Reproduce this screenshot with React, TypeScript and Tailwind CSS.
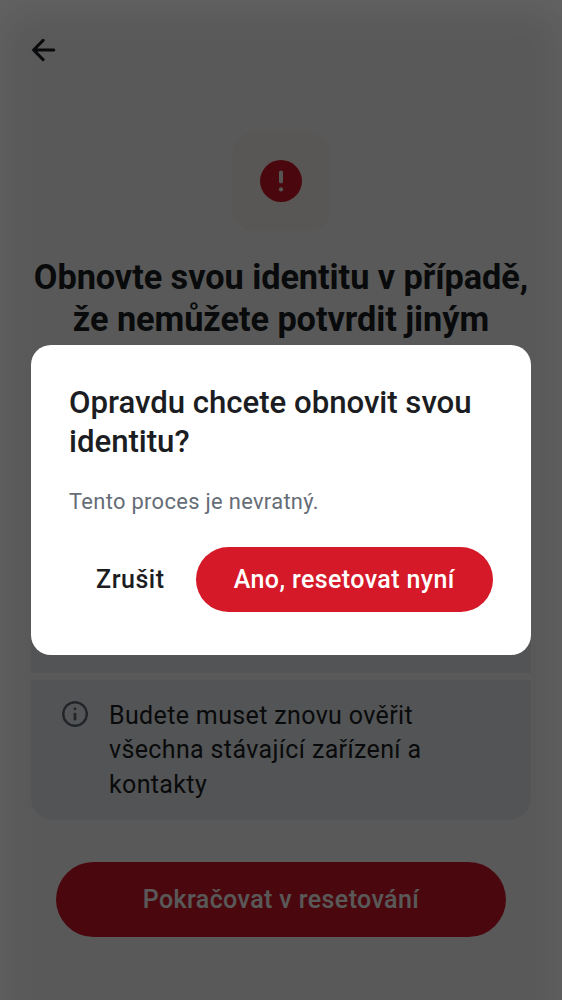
import React from "react";

function BackArrow() {
  return (
    <svg className="block h-6 w-6" viewBox="0 0 24 24" fill="none" stroke="#1b1d22" strokeWidth="3" strokeLinecap="round" strokeLinejoin="round">
      <path d="M21.8 12H2M11.1 2.4L1.6 12l9.5 9.6" />
    </svg>
  );
}

function ErrorIcon() {
  return (
    <svg className="block h-[42px] w-[42px]" viewBox="0 0 42 42">
      <circle cx="21" cy="21" r="21" fill="#d51928" />
      <rect x="19" y="10.8" width="4" height="12.4" rx="1.4" fill="#f7f3ef" />
      <circle cx="21" cy="29.4" r="2.1" fill="#f7f3ef" />
    </svg>
  );
}

function InfoIcon() {
  return (
    <svg className="block h-[26px] w-[26px] shrink-0" viewBox="0 0 26 26">
      <circle cx="13" cy="13" r="11.8" fill="none" stroke="#656d77" strokeWidth="2.5" />
      <circle cx="13" cy="7.9" r="1.4" fill="#656d77" />
      <rect x="11.6" y="11.8" width="2.8" height="7.6" rx="1.2" fill="#656d77" />
    </svg>
  );
}

function ResetPage() {
  return (
    <div className="flex h-full flex-col bg-white text-[#1b1d22]">
      <header className="flex h-[100px] shrink-0 items-center pl-8">
        <button aria-label="Zpět"><BackArrow /></button>
      </header>
      <div className="mx-auto mt-8 flex h-[99px] w-[99px] shrink-0 items-center justify-center rounded-[22px] bg-[#fff9f2] pb-[2px]">
        <ErrorIcon />
      </div>
      <h1 className="mt-[25px] h-[126px] shrink-0 whitespace-nowrap text-center text-[34.3px] font-bold leading-[42px] tracking-[-0.06px]">
        Obnovte svou identitu v případě,
        <br />
        že nemůžete potvrdit jiným
      </h1>
      <div className="mx-[31px] mt-[50px] flex h-[388px] shrink-0 flex-col gap-[7px]">
        <div className="flex-1 rounded-t-[22px] bg-[#ecf0f4]" />
        <div className="flex h-[140px] gap-[21px] rounded-b-[22px] bg-[#ecf0f4] pl-[31px] pt-[19px]">
          <div className="pt-[2px]"><InfoIcon /></div>
          <p className="whitespace-nowrap text-[25px] leading-[34.3px] tracking-[0.36px]">
            Budete muset znovu ověřit
            <br />
            všechna stávající zařízení a
            <br />
            kontakty
          </p>
        </div>
      </div>
      <button className="mx-14 mt-[42.3px] flex h-[75px] shrink-0 items-center justify-center rounded-full bg-[#d51928] text-[25px] font-medium tracking-[0.4px] text-white">
        Pokračovat v resetování
      </button>
    </div>
  );
}

function ConfirmDialog() {
  return (
    <div role="dialog" className="flex h-[310px] w-[500px] flex-col rounded-[20px] bg-white px-[38px] pt-[38px]">
      <h2 className="whitespace-nowrap text-[31.2px] font-medium leading-[39px] tracking-[-0.03px] text-[#1b1d22]">
        Opravdu chcete obnovit svou
        <br />
        identitu?
      </h2>
      <p className="mt-[25px] text-[21.9px] leading-[32px] tracking-[0.32px] text-[#656d77]">Tento proces je nevratný.</p>
      <div className="mt-[29px] flex items-center justify-end gap-[31px] whitespace-nowrap text-[25px] font-medium">
        <button className="tracking-[0.5px] text-[#1b1d22]">Zrušit</button>
        <button className="h-[65.4px] w-[297.5px] rounded-full bg-[#d51928] tracking-[0.4px] text-white">Ano, resetovat nyní</button>
      </div>
    </div>
  );
}

export default function App() {
  return (
    <div className="relative h-[1000px] w-[562px] overflow-hidden font-['Roboto',sans-serif]">
      <ResetPage />
      <div className="absolute inset-0 flex items-center justify-center bg-black/65">
        <div className="absolute inset-x-0 -bottom-12 top-0 shadow-[inset_0_8px_44px_rgba(255,255,255,0.065)]" />
        <ConfirmDialog />
      </div>
    </div>
  );
}
